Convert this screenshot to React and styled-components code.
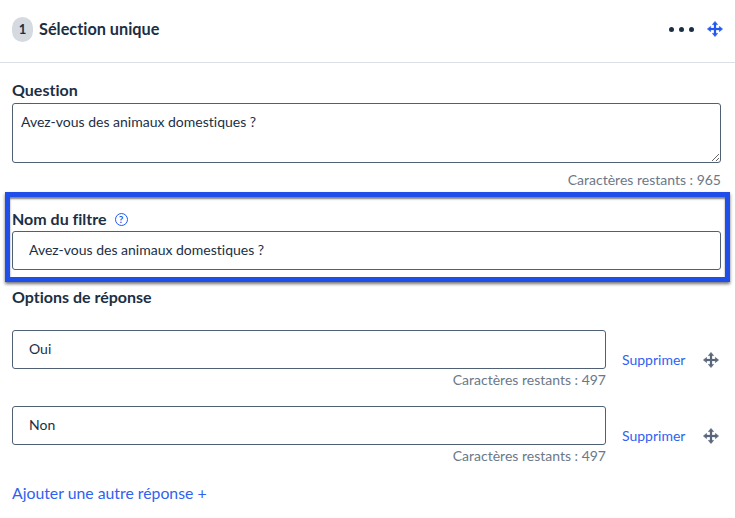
import React from "react";
import styled, { createGlobalStyle } from "styled-components";

const Global = createGlobalStyle`
  * { box-sizing: border-box; }
  html, body { margin: 0; background: #fff; }
  body {
    font-family: "Lato", "Liberation Sans", sans-serif;
    font-variant-ligatures: none;
    color: #1b2f44;
    overflow: hidden;
  }
`;

const Page = styled.div`
  width: 735px;
  height: 518px;
  overflow: hidden;
`;

const Header = styled.header`
  height: 63px;
  padding: 0 12px 4px;
  display: flex;
  align-items: center;
  border-bottom: 1px solid #dcdfe6;
`;

const Badge = styled.span`
  width: 21px;
  height: 25px;
  border-radius: 11px;
  background: #d5d9e0;
  display: flex;
  align-items: center;
  justify-content: center;
  font-size: 13px;
  font-weight: 700;
  margin-right: 6px;
`;

const Title = styled.h2`
  margin: 0 0 2px;
  font-size: 16.3px;
  font-weight: 700;
  flex: 1;
`;

const Dots = styled.div`
  display: flex;
  gap: 5px;
  margin-right: 13px;
`;

const Dot = styled.span`
  width: 5px;
  height: 5px;
  border-radius: 50%;
  background: #1b2f44;
`;

const Body = styled.div`
  padding: 18px 14px 0 12px;
`;

const Label = styled.label`
  display: block;
  font-size: 16px;
  line-height: 18px;
  font-weight: 700;
  margin-bottom: 4px;
`;

const TextArea = styled.textarea`
  display: block;
  width: 100%;
  height: 60px;
  padding: 9px 8px;
  border: 1px solid #4f5f74;
  border-radius: 3px;
  font: inherit;
  font-size: 14px;
  line-height: 18px;
  color: #1b2f44;
  outline: none;
`;

const Input = styled.input`
  display: block;
  width: 100%;
  height: 39px;
  padding: 0 16px 2px;
  border: 1px solid #4f5f74;
  border-radius: 3px;
  font: inherit;
  font-size: 14px;
  color: #1b2f44;
  outline: none;
`;

const Counter = styled.div`
  text-align: right;
  font-size: 14px;
  line-height: 17px;
  color: #6b7888;
  margin-top: ${(p) => p.$top || 2}px;
`;

const Highlight = styled.section`
  margin: 4px -9px 0 -7px;
  padding: 13px 4px 8px 2px;
  height: 90px;
  border: 5px solid #1f4fe8;
  box-shadow: 0 2px 3px rgba(0, 0, 0, 0.55), inset 0 2px 2px rgba(0, 0, 0, 0.5);
`;

const LabelRow = styled.div`
  display: flex;
  align-items: center;
  gap: 8px;
  margin-bottom: 3px;
  & > label { margin: 0; }
`;

const Help = styled.span`
  width: 13px;
  height: 13px;
  border: 1.2px solid #2158f0;
  border-radius: 50%;
  color: #2158f0;
  font-size: 10px;
  font-weight: 700;
  line-height: 11px;
  text-align: center;
`;

const OptionsLabel = styled(Label)`
  margin: 6px 0 24px;
`;

const OptionRow = styled.div`
  display: grid;
  grid-template-columns: 594px auto 1fr;
  margin-bottom: 18px;
`;

const Field = styled.div`
  min-width: 0;
`;

const Link = styled.a`
  color: #2f62f0;
  font-size: 14px;
  line-height: 17px;
  cursor: pointer;
`;

const Remove = styled(Link)`
  margin: 21px 0 0 16px;
`;

const Handle = styled.span`
  justify-self: end;
  margin: ${(p) => (p.$inline ? "0" : "22px 2px 0 0")};
  height: 16px;
  color: ${(p) => (p.$inline ? "#2158f0" : "#59677a")};
  display: flex;
`;

const AddLink = styled(Link)`
  display: block;
  font-size: 15.8px;
  margin-top: 20px;
`;

const MoveIcon = () => (
  <svg width="16" height="16" viewBox="0 0 16 16" fill="currentColor">
    <rect x="6.9" y="2" width="2.2" height="12" />
    <rect x="2" y="6.9" width="12" height="2.2" />
    <path
      d="M8 .4 10.6 3.6H5.4ZM8 15.6 5.4 12.4H10.6ZM.4 8 3.6 5.4V10.6ZM15.6 8 12.4 10.6V5.4Z"
      stroke="currentColor"
      strokeWidth=".6"
      strokeLinejoin="round"
    />
  </svg>
);

const Option = ({ value }) => (
  <OptionRow>
    <Field>
      <Input defaultValue={value} />
      <Counter>Caractères restants : 497</Counter>
    </Field>
    <Remove>Supprimer</Remove>
    <Handle>
      <MoveIcon />
    </Handle>
  </OptionRow>
);

export default function App() {
  return (
    <Page>
      <Global />
      <Header>
        <Badge>1</Badge>
        <Title>Sélection unique</Title>
        <Dots>
          <Dot />
          <Dot />
          <Dot />
        </Dots>
        <Handle $inline>
          <MoveIcon />
        </Handle>
      </Header>
      <Body>
        <Label>Question</Label>
        <TextArea defaultValue="Avez-vous des animaux domestiques ?" />
        <Counter $top={8}>Caractères restants : 965</Counter>
        <Highlight>
          <LabelRow>
            <Label>Nom du filtre</Label>
            <Help>?</Help>
          </LabelRow>
          <Input defaultValue="Avez-vous des animaux domestiques ?" />
        </Highlight>
        <OptionsLabel>Options de réponse</OptionsLabel>
        <Option value="Oui" />
        <Option value="Non" />
        <AddLink>Ajouter une autre réponse +</AddLink>
      </Body>
    </Page>
  );
}
